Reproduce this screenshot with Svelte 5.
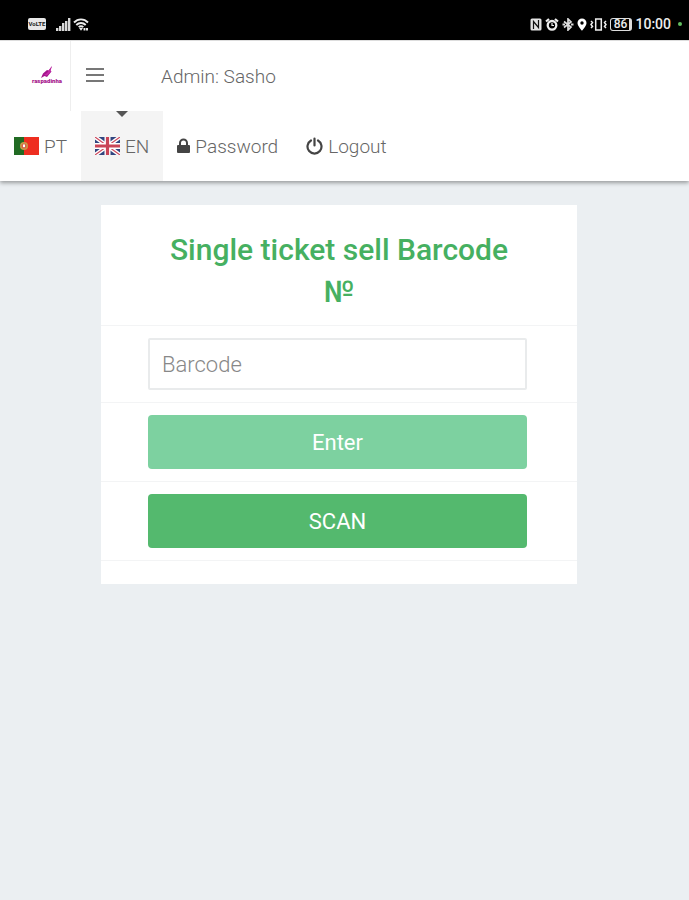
<script lang="ts">
	let barcode = '';
</script>

<div class="status-bar">
	<div class="status-group">
		<span class="volte">VoLTE</span>
		<svg class="signal" width="15" height="13" viewBox="0 0 15 13" fill="#d8d8d8">
			<path d="M0 10h2.400v3H0zM3 8h2.400v5H3zM6 5h2.400v8H6zM9 3h2.400v10H9zM12 0h2.400v13H12z" />
		</svg>
		<svg width="16" height="13" viewBox="0 0 16 13" fill="none" stroke="#eee" stroke-width="1.900">
			<path d="M1 4.500C5 .300 11 .300 15 4.500M3.300 7C6 4.300 10 4.300 12.700 7M5.700 9.200c1.300-1.300 3.300-1.300 4.600 0" />
			<path d="M6 10h4L8 12.800z" fill="#eee" stroke="none" />
			<path d="M11.500 12.500V10M14 10v2.500" />
		</svg>
	</div>
	<div class="status-group right">
		<svg width="12" height="13" viewBox="0 0 12 13">
			<rect x=".500" y=".500" width="11" height="12" rx="1.500" fill="#e4e4e4" />
			<path d="M3.500 11V3.500l5 6V2" fill="none" stroke="#111" stroke-width="1.200" />
		</svg>
		<svg width="14" height="13" viewBox="0 0 14 13" fill="none" stroke="#eee">
			<circle cx="7" cy="7.300" r="4.300" stroke-width="2.300" />
			<path d="M7 5v2.500h2" stroke-width="1.200" />
			<path d="M1 3.500L4 1M10 1l3 2.500" stroke-width="2.200" />
		</svg>
		<svg width="12" height="13" viewBox="0 0 12 13" fill="none" stroke="#ddd" stroke-width="1.700">
			<path d="M2 3.500l7 5.500-3 3V1l3 3-7 5.500" />
			<path d="M.500 6.500h2.500M9 6.500h2.500" stroke-width="2.200" />
		</svg>
		<svg width="10" height="13" viewBox="0 0 10 13" fill="#fff">
			<path fill-rule="evenodd" d="M5 .500a4.500 4.500 0 0 1 4.500 4.500C9.500 8 5 12.800 5 12.800S.500 8 .500 5A4.500 4.500 0 0 1 5 .500zM5 3.300a1.700 1.700 0 1 0 0 3.400 1.700 1.700 0 0 0 0-3.400z" />
		</svg>
		<svg width="17" height="13" viewBox="0 0 17 13" fill="none" stroke="#eee" stroke-width="1.500">
			<path d="M5.700 1h5.600v11H5.700zM1 3l1.500 1.500L1 6.500l1.500 2L1 10M16 3l-1.500 1.500L16 6.500l-1.500 2L16 10" />
		</svg>
		<span class="battery">86</span>
		<span class="clock">10:00</span>
		<span class="dot"></span>
	</div>
</div>

<header>
	<div class="top-row">
		<a class="logo" href="/" aria-label="raspadinha">
			<svg width="34" height="20" viewBox="0 0 34 20">
				<path d="M22 0l-1.500 4.500 1 1L17 11l-2.500-1-3.500 2 2-4.500 4-3.500 1.500.500z" fill="#a5148c" />
				<path d="M22 0l-5 7-3 2 3 .500 4-4-.700-1z" fill="#c42aa9" />
				<text x="17" y="17" text-anchor="middle">raspadinha</text>
			</svg>
		</a>
		<button class="menu-toggle" type="button" aria-label="Toggle menu">
			<span></span><span></span><span></span>
		</button>
		<span class="user">Admin: Sasho</span>
	</div>
	<nav>
		<a href="/pt">
			<svg width="25" height="18" viewBox="0 0 25 18">
				<path d="M0 0h10v18H0z" fill="#216b23" />
				<path d="M10 0h15v18H10z" fill="#ee2e20" />
				<circle cx="10" cy="9" r="4" fill="#c99a48" />
				<circle cx="10" cy="9" r="2.500" fill="#d8604c" />
				<path d="M9 7.500h2v2l-1 1-1-1z" fill="#fff" />
			</svg>
			PT
		</a>
		<a class="active" href="/en">
			<svg width="25" height="18" viewBox="0 0 25 18">
				<path d="M0 0h25v18H0z" fill="#31457f" />
				<path d="M0 0l25 18M25 0L0 18" stroke="#fff" stroke-width="4" />
				<path d="M0 0l25 18M25 0L0 18" stroke="#ce4b5e" stroke-width="1.200" />
				<path d="M12.500 0v18M0 9h25" stroke="#fff" stroke-width="6" />
				<path d="M12.500 0v18M0 9h25" stroke="#c94456" stroke-width="3.200" />
			</svg>
			EN
		</a>
		<a href="/password">
			<svg width="13" height="16" viewBox="0 0 13 16">
				<path d="M3 8V5a3.500 3.500 0 0 1 7 0v3" fill="none" stroke="#444" stroke-width="2" />
				<rect y="7" width="13" height="8" rx="1" fill="#444" />
			</svg>
			Password
		</a>
		<a href="/logout">
			<svg width="17" height="18" viewBox="0 0 17 18" fill="none" stroke="#444" stroke-width="2.200" stroke-linecap="round">
				<path d="M5 3.500a7 7 0 1 0 7 0M8.500 1.500v7" />
			</svg>
			Logout
		</a>
	</nav>
</header>

<main>
	<form class="card" on:submit|preventDefault>
		<h1>Single ticket sell Barcode <span class="numero">№</span></h1>
		<div class="row">
			<input type="text" placeholder="Barcode" aria-label="Barcode" bind:value={barcode} />
		</div>
		<div class="row">
			<button class="btn enter" type="submit">Enter</button>
		</div>
		<div class="row">
			<button class="btn scan" type="button">SCAN</button>
		</div>
	</form>
</main>

<style>
	:global(body) {
		background: #ebeff2;
		color: #666;
		font-family: Roboto, sans-serif;
		font-size: 19px;
		font-weight: 300;
	}

	.status-bar {
		display: flex;
		align-items: center;
		justify-content: space-between;
		height: 40px;
		padding: 8px 7px 0 28px;
		box-sizing: border-box;
		background: #000;
		color: #eee;
	}

	.status-group {
		display: flex;
		align-items: center;
		gap: 2px;
	}

	.status-group.right {
		gap: 3px;
	}

	.volte {
		width: 18px;
		border-radius: 2px;
		background: #e8e8e8;
		color: #222;
		font-size: 6px;
		font-weight: 700;
		line-height: 12px;
		text-align: center;
	}

	.signal {
		margin-left: 8px;
	}

	.battery {
		width: 18px;
		border: 1px solid #ddd;
		border-right-width: 3px;
		border-radius: 3px;
		font-size: 12px;
		font-weight: 500;
		line-height: 11px;
		text-align: center;
	}

	.clock {
		font-size: 14px;
		font-weight: 500;
		line-height: 16px;
	}

	.dot {
		width: 4px;
		height: 4px;
		margin-left: 4px;
		border-radius: 50%;
		background: #62bd60;
	}

	header {
		border-top: 1px solid #ddd;
		background: #fff;
		box-shadow: 0 2px 4px rgba(0, 0, 0, 0.35);
	}

	.top-row {
		display: flex;
		align-items: center;
		height: 70px;
	}

	.logo {
		display: flex;
		align-items: center;
		justify-content: flex-end;
		width: 71px;
		height: 70px;
		padding-right: 6px;
		box-sizing: border-box;
		border-right: 1px solid #eee;
	}

	.logo text {
		fill: #a5148c;
		font-size: 6px;
		font-weight: 900;
	}

	.menu-toggle {
		display: flex;
		flex-direction: column;
		gap: 4px;
		width: 48px;
		padding: 10px 15px 12px;
		border: 0;
		background: none;
		cursor: pointer;
	}

	.menu-toggle span {
		height: 2px;
		background: #777;
	}

	.user {
		margin-left: 42px;
	}

	nav {
		display: flex;
		height: 70px;
	}

	nav a {
		position: relative;
		display: flex;
		align-items: center;
		gap: 5px;
		padding: 0 14px;
		color: #666;
		text-decoration: none;
	}

	nav a.active {
		background: #f4f4f4;
	}

	nav a.active::before {
		content: '';
		position: absolute;
		top: 0;
		left: 50%;
		margin-left: -6px;
		border: 6px solid transparent;
		border-top-color: #555;
		border-bottom: 0;
	}

	main {
		padding: 24px 112px 24px 101px;
	}

	.card {
		padding-bottom: 23px;
		background: #fff;
	}

	h1 {
		margin: 0;
		padding: 24px 47px 12px;
		border-bottom: 1px solid #f3f4f5;
		color: #46b061;
		font-size: 30px;
		font-weight: 500;
		line-height: 42px;
		text-align: center;
	}

	.numero {
		display: block;
	}

	.row {
		padding: 12px 50px 12px 47px;
		border-bottom: 1px solid #f3f4f5;
	}

	input,
	.btn {
		display: block;
		width: 100%;
		box-sizing: border-box;
		font-family: inherit;
		font-size: 22px;
	}

	input {
		height: 52px;
		padding: 0 12px;
		border: 2px solid #e9ebec;
		border-radius: 2px;
		background: #fff;
		color: #666;
		font-weight: 300;
	}

	input::placeholder {
		color: #888;
	}

	.btn {
		height: 54px;
		border: 0;
		border-radius: 4px;
		color: #fff;
		font-weight: 400;
		cursor: pointer;
	}

	.enter {
		background: #7dd1a0;
	}

	.scan {
		background: #54b96e;
	}
</style>
